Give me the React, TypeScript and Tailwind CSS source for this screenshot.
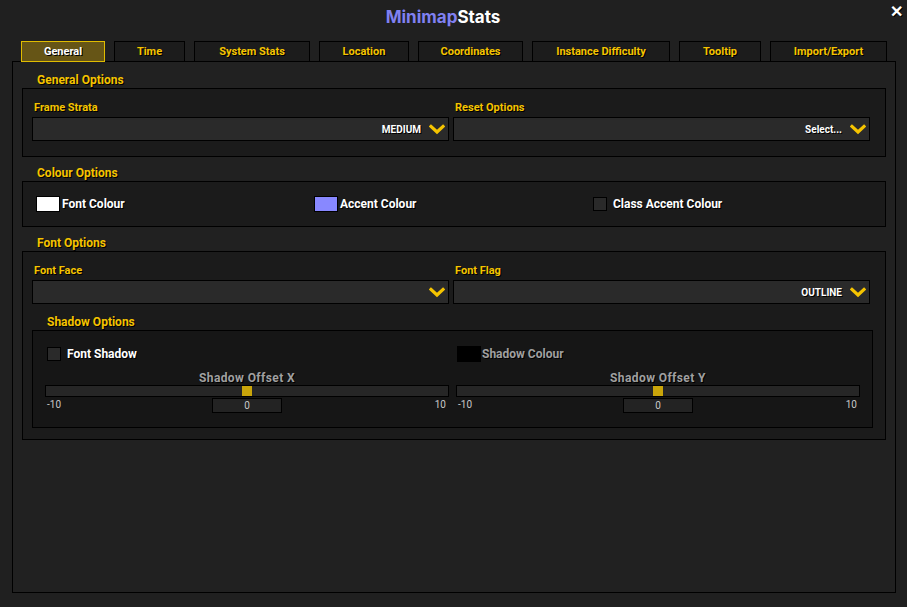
import React from 'react'

const tabs = [
  { label: 'General', w: 'w-[84px]', active: true },
  { label: 'Time', w: 'w-[71px]' },
  { label: 'System Stats', w: 'w-[116px]' },
  { label: 'Location', w: 'w-[90px]' },
  { label: 'Coordinates', w: 'w-[105px]' },
  { label: 'Instance Difficulty', w: 'w-[138px]' },
  { label: 'Tooltip', w: 'w-[82px]' },
  { label: 'Import/Export', w: 'w-[117px]' },
]

const shadow = '[text-shadow:1px_1px_0_#000]'

const Chevron = () => (
  <svg width="16" height="11" viewBox="0 0 16 11" className="shrink-0">
    <path d="M2 2.5 L8 8 L14 2.5" fill="none" stroke="#f5c400" strokeWidth="3.2" strokeLinecap="square" />
  </svg>
)

const Heading = ({ children, className = '' }: { children: React.ReactNode; className?: string }) => (
  <div className={`text-[12px] leading-[12px] font-bold text-[#f5c400] ${shadow} ${className}`}>{children}</div>
)

const Label = ({ children }: { children: React.ReactNode }) => (
  <div className={`pl-[2px] text-[11px] leading-[12px] font-bold text-[#f5c400] ${shadow}`}>{children}</div>
)

const Dropdown = ({ value }: { value?: string }) => (
  <div className="h-[24px] bg-[#2a2a2a] border border-black flex items-center justify-end gap-[8px] pr-[3px]">
    {value && <span className={`text-[10px] font-bold text-white ${shadow}`}>{value}</span>}
    <Chevron />
  </div>
)

const Slider = ({ label }: { label: string }) => (
  <div className="w-[404px] flex flex-col">
    <div className={`text-center text-[12px] leading-[12px] font-bold text-[#a0a0a0] tracking-[0.4px] ${shadow}`}>{label}</div>
    <div className="relative mt-[1px] h-[12px] bg-[#262626] border border-black">
      <div className="absolute left-[196px] top-0 w-[10px] h-[10px] bg-[#c9a50a]" />
    </div>
    <div className="relative h-[16px] mt-[1px]">
      <span className="absolute left-[2px] top-[0px] text-[10px] leading-[14px] text-[#c8c8c8]">-10</span>
      <div className="absolute left-[167px] top-0 w-[70px] h-[15px] bg-[#232323] border border-black flex items-center justify-center text-[10px] text-[#c8c8c8]">0</div>
      <span className="absolute right-[3px] top-[0px] text-[10px] leading-[14px] text-[#c8c8c8]">10</span>
    </div>
  </div>
)

export default function App() {
  return (
    <div className="w-[907px] h-[607px] bg-[#202020] relative overflow-hidden font-['Roboto',sans-serif]">
      <div className="h-[41px] flex items-start justify-center pt-[5px] pr-[21px]">
        <span className="text-[17px] font-bold font-['Inter',sans-serif]">
          <span className="text-[#8080f2]">Minimap</span>
          <span className="text-white">Stats</span>
        </span>
      </div>
      <div className={`absolute right-[4px] top-[0px] text-white text-[16px] font-bold ${shadow}`}>✕</div>

      <div className="flex gap-[9px] pl-[21px] h-[21px]">
        {tabs.map((t) => (
          <div
            key={t.label}
            className={`${t.w} h-[21px] border flex items-center justify-center pt-[1px] text-[11px] font-bold ${shadow} ${
              t.active ? 'bg-[#665516] border-[#e0bc00] text-white' : 'bg-[#1c1c1c] border-black text-[#f5c400]'
            }`}
          >
            {t.label}
          </div>
        ))}
      </div>

      <div className="ml-[12px] w-[884px] h-[532px] -mt-[1px] border border-black bg-[#212121] px-[9px]">
        <Heading className="pt-[12px] pb-[2px] pl-[15px]">General Options</Heading>
        <div className="h-[69px] bg-[#1b1b1b] border border-black pl-[9px] pt-[13px]">
          <div className="flex gap-[4px]">
            <div className="w-[417px]">
              <Label>Frame Strata</Label>
              <div className="mt-[3px]">
                <Dropdown value="MEDIUM" />
              </div>
            </div>
            <div className="w-[417px]">
              <Label>Reset Options</Label>
              <div className="mt-[3px]">
                <Dropdown value="Select..." />
              </div>
            </div>
          </div>
        </div>

        <Heading className="pt-[10px] pb-[2px] pl-[15px]">Colour Options</Heading>
        <div className="h-[46px] bg-[#1b1b1b] border border-black pl-[13px] flex items-center">
          <div className="w-[278px] flex items-center gap-[2px]">
            <div className="w-[24px] h-[16px] bg-white border border-black" />
            <span className={`text-[12px] font-bold text-white ${shadow}`}>Font Colour</span>
          </div>
          <div className="w-[279px] flex items-center gap-[2px]">
            <div className="w-[24px] h-[16px] bg-[#8888ff] border border-black" />
            <span className={`text-[12px] font-bold text-white ${shadow}`}>Accent Colour</span>
          </div>
          <div className="flex items-center gap-[6px]">
            <div className="w-[14px] h-[14px] bg-[#2a2a2a] border border-black" />
            <span className={`text-[12px] font-bold text-white ${shadow}`}>Class Accent Colour</span>
          </div>
        </div>

        <Heading className="pt-[10px] pb-[2px] pl-[15px]">Font Options</Heading>
        <div className="h-[189px] bg-[#1b1b1b] border border-black pl-[9px] pt-[13px]">
          <div className="flex gap-[4px]">
            <div className="w-[417px]">
              <Label>Font Face</Label>
              <div className="mt-[3px]">
                <Dropdown />
              </div>
            </div>
            <div className="w-[417px]">
              <Label>Font Flag</Label>
              <div className="mt-[3px]">
                <Dropdown value="OUTLINE" />
              </div>
            </div>
          </div>
          <Heading className="pt-[12px] pb-[2px] pl-[15px]">Shadow Options</Heading>
          <div className="w-[841px] h-[98px] bg-[#161616] border border-black px-[12px] pt-[15px]">
            <div className="flex gap-[7px] h-[16px]">
              <div className="w-[404px] flex items-center gap-[6px] pl-[2px]">
                <div className="w-[14px] h-[14px] bg-[#2a2a2a] border border-black" />
                <span className={`text-[12px] leading-[14px] font-bold text-white ${shadow}`}>Font Shadow</span>
              </div>
              <div className="w-[404px] flex items-center gap-[1px] pl-[1px]">
                <div className="w-[24px] h-[16px] bg-black" />
                <span className={`text-[12px] leading-[14px] font-bold text-[#a0a0a0] ${shadow}`}>Shadow Colour</span>
              </div>
            </div>
            <div className="flex gap-[7px] mt-[10px]">
              <Slider label="Shadow Offset X" />
              <Slider label="Shadow Offset Y" />
            </div>
          </div>
        </div>
      </div>
    </div>
  )
}
